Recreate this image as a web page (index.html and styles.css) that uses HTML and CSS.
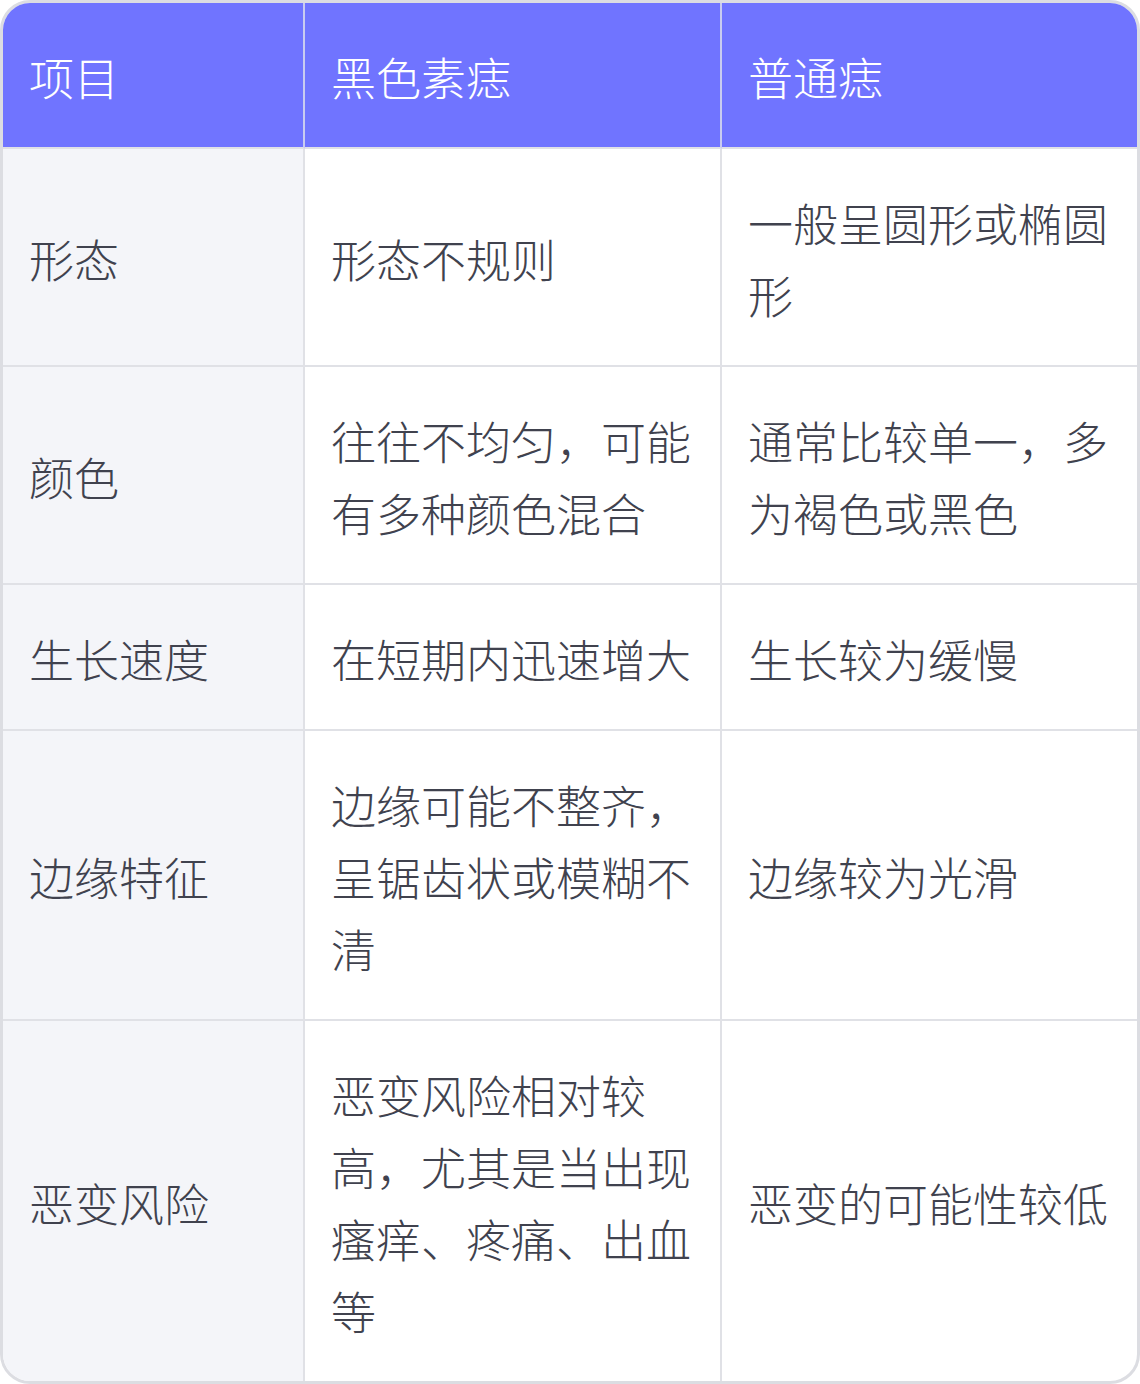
FILE: index.html
```html
<!DOCTYPE html>
<html lang="zh-CN">
<head>
<meta charset="utf-8">
<link rel="stylesheet" href="styles.css">
</head>
<body>
<div class="card">
<table class="cmp">
<colgroup><col class="c1"><col class="c2"><col class="c3"></colgroup>
<thead>
<tr><th>项目</th><th>黑色素痣</th><th>普通痣</th></tr>
</thead>
<tbody>
<tr><td class="key">形态</td><td>形态不规则</td><td>一般呈圆形或椭圆形</td></tr>
<tr><td class="key">颜色</td><td>往往不均匀，可能有多种颜色混合</td><td>通常比较单一，多为褐色或黑色</td></tr>
<tr><td class="key">生长速度</td><td>在短期内迅速增大</td><td>生长较为缓慢</td></tr>
<tr><td class="key">边缘特征</td><td>边缘可能不整齐，呈锯齿状或模糊不清</td><td>边缘较为光滑</td></tr>
<tr><td class="key">恶变风险</td><td>恶变风险相对较高，尤其是当出现瘙痒、疼痛、出血等</td><td>恶变的可能性较低</td></tr>
</tbody>
</table>
</div>
</body>
</html>
```
FILE: styles.css
```css
html, body { margin: 0; padding: 0; background: #ffffff; }
.card {
  width: 1140px;
  height: 1384px;
  box-sizing: border-box;
  border: 3px solid #dcdde2;
  border-radius: 30px;
  overflow: hidden;
  background: #ffffff;
}
.cmp {
  width: 1134px;
  border-collapse: separate;
  border-spacing: 0;
  table-layout: fixed;
  font-family: "Noto Sans CJK SC", "Noto Sans", sans-serif;
  font-size: 45px;
  line-height: 72px;
  color: #40424e;
}
.c1 { width: 302px; }
.c2 { width: 417px; }
.c3 { width: 415px; }
.cmp th, .cmp td {
  padding: 38px 26px 34px;
  text-align: left;
  vertical-align: middle;
  font-weight: 300;
  border-right: 2px solid #e0e1e6;
  border-bottom: 2px solid #e0e1e6;
}
.cmp th:last-child, .cmp td:last-child { border-right: none; }
.cmp tbody tr:last-child td { border-bottom: none; }
.cmp th {
  background: #7074ff;
  color: #ffffff;
  border-right-color: #c9cbf0;
  border-bottom-color: #e0e1e6;
}
.cmp td.key { background: #f4f5f9; }
```
